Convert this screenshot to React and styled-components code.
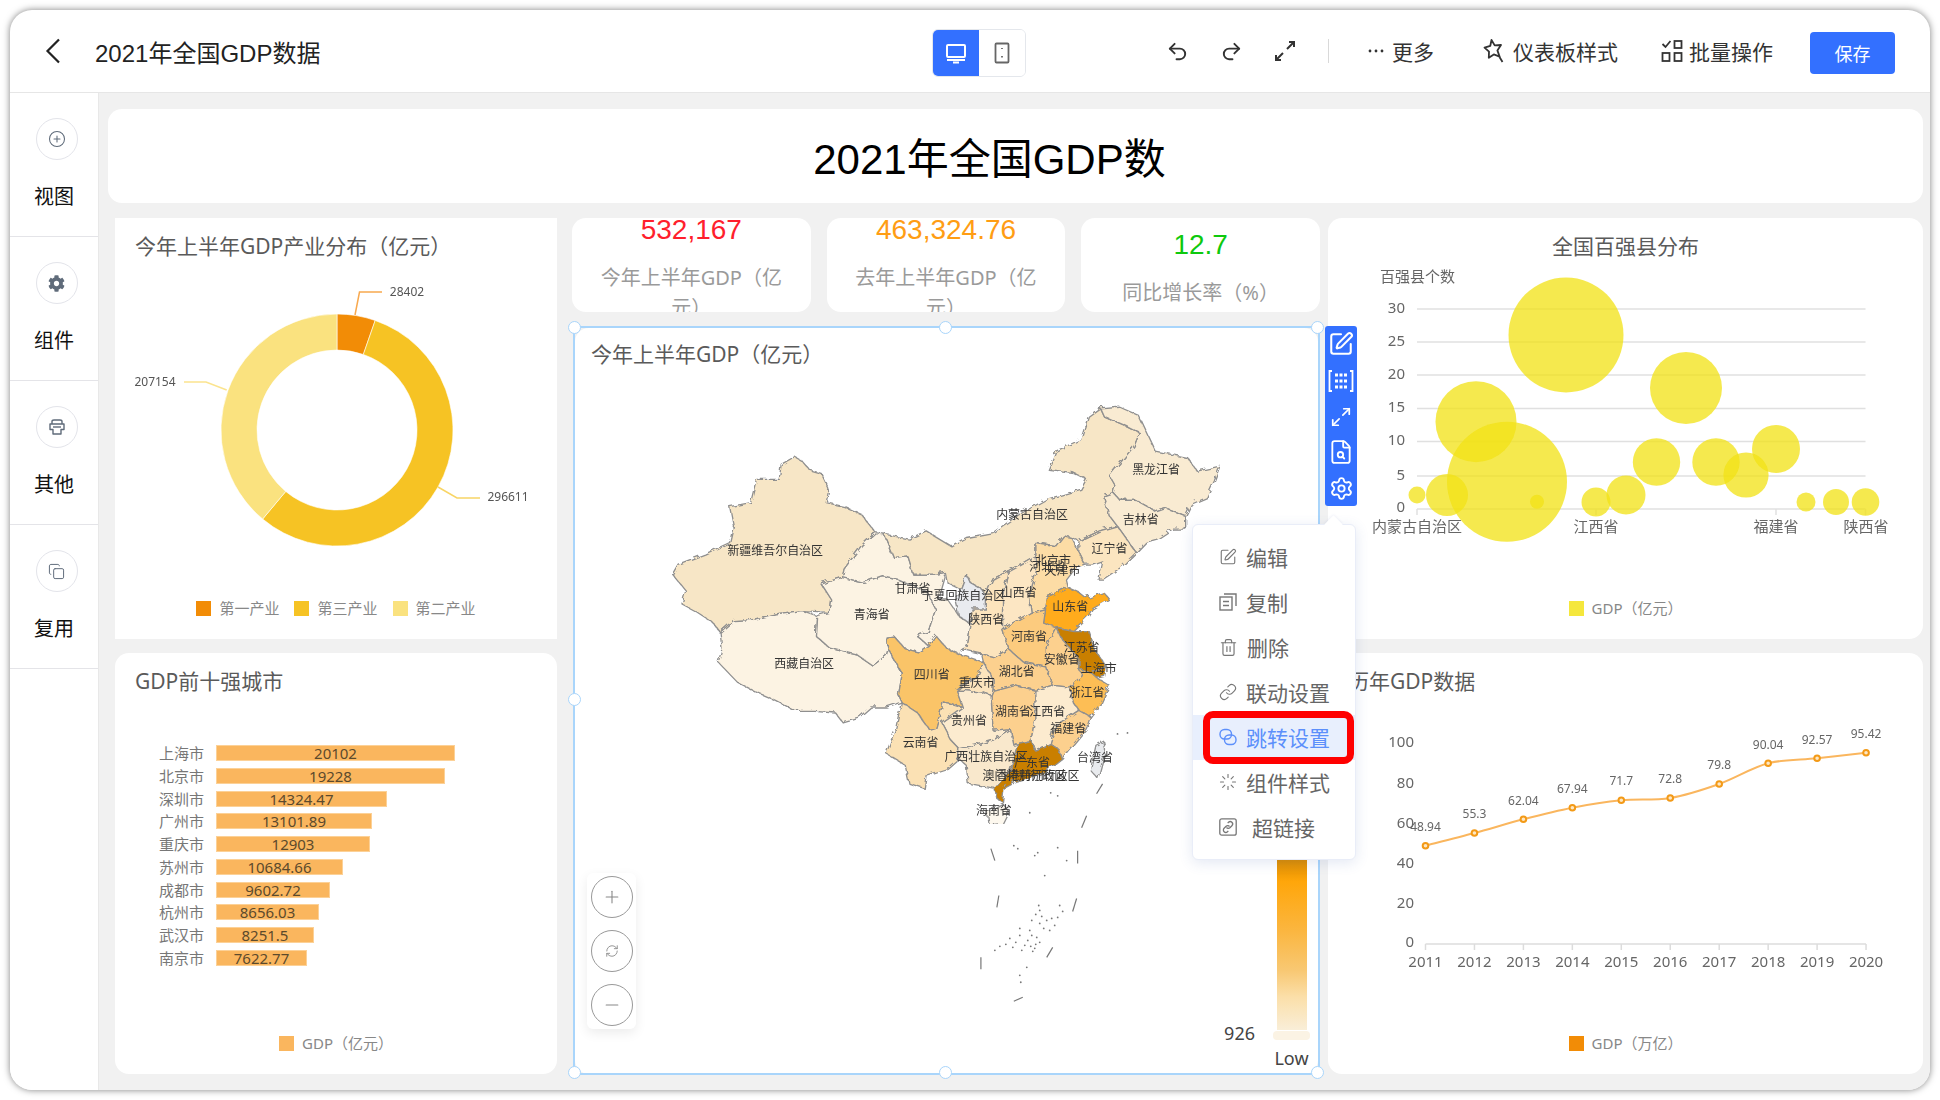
import styled, { createGlobalStyle } from "styled-components";
import {
  CirclePlus,
  Copy,
  FileSearch,
  Link,
  Loader,
  Maximize2,
  Minus,
  Plus,
  Redo2,
  RefreshCw,
  Settings,
  SquarePen,
  Trash2,
  Undo2,
} from "lucide-react";
import { FaCog } from "react-icons/fa";

const CJK = `"Noto Sans CJK SC", sans-serif`;
const UI_FONT = `"Noto Sans", ${CJK}`;
const HEAD_FONT = `"Liberation Sans", ${CJK}`;

const GlobalStyle = createGlobalStyle`
  html, body {
    margin: 0;
    background: #fff;
    overflow: hidden;
  }
  * {
    box-sizing: border-box;
  }
`;

const Window = styled.div`
  width: 1920px;
  height: 1080px;
  margin: 10px;
  display: flex;
  flex-direction: column;
  background: #fff;
  border-radius: 22px;
  overflow: hidden;
  box-shadow: 0 0 7px rgba(0, 0, 0, 0.5);
  font-family: ${UI_FONT};
`;

const Header = styled.header`
  height: 83px;
  flex: none;
  display: flex;
  align-items: center;
  border-bottom: 1px solid #e6e6e6;
`;

const HeaderLeft = styled.div`
  width: 922px;
  display: flex;
  align-items: center;
  padding-left: 35px;
  gap: 34px;
  color: #222;
`;

const PageName = styled.div`
  font: 24px ${HEAD_FONT};
  color: #222;
`;

const DeviceToggle = styled.div`
  display: flex;
  width: 94px;
  height: 48px;
  margin-top: 3px;
  border: 1px solid #e4e7ec;
  border-radius: 6px;
  overflow: hidden;
`;

const DeviceButton = styled.div`
  flex: 1;
  display: flex;
  align-items: center;
  justify-content: center;
  background: ${(props) => (props.$active ? "#3370ff" : "#fff")};
  color: ${(props) => (props.$active ? "#fff" : "#666")};
`;

const HeaderRight = styled.div`
  flex: 1;
  display: flex;
  align-items: center;
  justify-content: flex-end;
  padding-right: 35px;
  color: #333;
`;

const HistoryButtons = styled.div`
  display: flex;
  gap: 31px;
  color: #333;
`;

const HeaderDivider = styled.div`
  width: 1px;
  height: 24px;
  background: #d9d9d9;
  margin: 0 39px 0 32px;
`;

const ActionLink = styled.div`
  display: flex;
  align-items: center;
  gap: ${(props) => props.$gap || 8}px;
  margin-right: ${(props) => props.$after}px;
  font-size: 21px;
  color: #333;
`;

const SaveButton = styled.button`
  width: 85px;
  height: 42px;
  margin-top: 3px;
  border: 0;
  border-radius: 4px;
  background: #3370ff;
  color: #fff;
  font: 18px ${CJK};
  padding: 0;
`;

const Body = styled.div`
  flex: 1;
  display: flex;
  min-height: 0;
`;

const Sidebar = styled.aside`
  width: 89px;
  flex: none;
  border-right: 1px solid #e8e8e8;
  background: #fff;
`;

const SideItem = styled.div`
  height: 144px;
  display: flex;
  flex-direction: column;
  align-items: center;
  padding-top: 25px;
  gap: 22px;
  border-bottom: 1px solid #e4e4e8;
  font: 20px/28px ${CJK};
  color: #111;
`;

const SideIcon = styled.div`
  width: 42px;
  height: 42px;
  margin-left: 5px;
  display: flex;
  align-items: center;
  justify-content: center;
  border: 1px solid #e3e4ea;
  border-radius: 50%;
  color: #5f6b7a;
`;

const Canvas = styled.main`
  flex: 1;
  min-width: 0;
  background: #f1f1f1;
  padding: 16px 7px 16px 9px;
  display: flex;
  flex-direction: column;
  gap: 15px;
`;

const TitleCard = styled.div`
  height: 94px;
  flex: none;
  display: flex;
  align-items: center;
  justify-content: center;
  padding: 0 52px 2px 0;
  background: #fff;
  border-radius: 14px;
  font: 42px ${HEAD_FONT};
  color: #000;
`;

const DashGrid = styled.div`
  margin-left: 7px;
  display: grid;
  grid-template-columns: 442px 748px 595px;
  grid-template-rows: 421px 421px;
  column-gap: 15px;
  row-gap: 14px;
`;

const Card = styled.section`
  display: flex;
  flex-direction: column;
  min-width: 0;
  background: #fff;
  border-radius: ${(props) => (props.$square ? "0" : "14px")};
  ${(props) =>
    props.$right &&
    `
    margin-left: -7px;
    margin-right: 7px;
  `}
`;

const CardTitle = styled.h3`
  margin: 0;
  height: 42px;
  flex: none;
  padding: ${(props) => props.$top || 15}px ${(props) => props.$inset || 20}px 0;
  font: 400 21px/26px ${UI_FONT};
  color: #5a5a5a;
  text-align: ${(props) => (props.$center ? "center" : "left")};
`;

const Chart = styled.svg`
  display: block;
  width: 100%;
  flex: 1;
  min-height: 0;
  font-family: ${UI_FONT};
  filter: blur(0.35px);
`;

const Legend = styled.div`
  flex: none;
  height: 18px;
  margin-bottom: 22px;
  display: flex;
  justify-content: center;
  gap: 15px;
  font: 15px/18px ${UI_FONT};
  color: #888;
`;

const LegendItem = styled.div`
  display: flex;
  align-items: center;
  gap: 8px;
`;

const Swatch = styled.i`
  width: 15px;
  height: 15px;
  background: ${(props) => props.$color};
`;

const BarList = styled.div`
  flex: 1;
  display: flex;
  flex-direction: column;
  gap: 6.75px;
  padding-top: 50px;
`;

const BarRow = styled.div`
  display: flex;
  align-items: center;
  gap: 12px;
  height: 16px;
`;

const BarLabel = styled.span`
  width: 89px;
  text-align: right;
  font: 15px/16px ${CJK};
  color: #777;
`;

const Bar = styled.div`
  width: ${(props) => props.$w}px;
  height: 16px;
  background: #fab65e;
  box-shadow: inset 0 0 0 1px #fcd197;
  text-align: center;
  font: 15px/16px ${UI_FONT};
  color: #5c4a2c;
`;

const MiddleColumn = styled.div`
  grid-row: span 2;
  display: flex;
  flex-direction: column;
  gap: 16px;
  min-height: 0;
`;

const StatRow = styled.div`
  height: 94px;
  flex: none;
  display: grid;
  grid-template-columns: repeat(3, 1fr);
  gap: 16px;
`;

const StatCard = styled.div`
  height: 94px;
  display: flex;
  flex-direction: column;
  align-items: center;
  justify-content: center;
  gap: 15px;
  padding: 5px 20px 0;
  background: #fff;
  border-radius: 14px;
  overflow: hidden;
`;

const StatValue = styled.div`
  flex: none;
  font: 28px/36px ${HEAD_FONT};
  color: ${(props) => props.$color};
`;

const StatLabel = styled.div`
  flex: none;
  font: 20px/30px ${UI_FONT};
  color: #9a9a9a;
  text-align: center;
`;

const MapArea = styled.div`
  position: relative;
  z-index: 5;
  height: 746px;
  margin: 0 2px 0 3px;
  display: flex;
  flex-direction: column;
  background: #fff;
  border-radius: 14px;
`;

const Frame = styled.div`
  position: absolute;
  inset: -2px -2px -1px -2px;
  border: 2px solid #a9d5fb;
  pointer-events: none;
`;

const Handle = styled.i`
  position: absolute;
  width: 13px;
  height: 13px;
  margin: -7.5px 0 0 -7.5px;
  left: ${(props) => props.$x};
  top: ${(props) => props.$y};
  background: #fff;
  border: 1.5px solid #a9d5fb;
  border-radius: 50%;
`;

const ZoomControl = styled.div`
  position: absolute;
  left: 12px;
  top: 545px;
  width: 49px;
  height: 156px;
  display: flex;
  flex-direction: column;
  align-items: center;
  justify-content: center;
  gap: 12px;
  background: #fff;
  border-radius: 6px;
  box-shadow: 0 4px 12px rgba(0, 0, 0, 0.08);
`;

const ZoomButton = styled.div`
  width: 42px;
  height: 42px;
  display: flex;
  align-items: center;
  justify-content: center;
  border: 1.5px solid #999;
  border-radius: 50%;
  color: #888;
`;

const ScaleBar = styled.div`
  position: absolute;
  left: 702px;
  top: 372px;
  width: 30px;
  height: 330px;
  background: linear-gradient(
    180deg,
    #c77f00 0%,
    #d98a00 48%,
    #ffa60a 55%,
    #fbb640 70%,
    #f8c873 82%,
    #fbdfa9 90%,
    #f9eed8 100%
  );
`;

const ScaleThumb = styled.div`
  position: absolute;
  left: 698px;
  top: 703px;
  width: 37px;
  height: 9px;
  background: #fbf3e4;
  border-radius: 4px;
`;

const ScaleValue = styled.div`
  position: absolute;
  right: 63px;
  top: 694px;
  font: 18px/22px ${UI_FONT};
  color: #444;
`;

const ScaleName = styled.div`
  position: absolute;
  left: 698px;
  top: 719px;
  width: 37px;
  text-align: center;
  font: 18px/22px ${UI_FONT};
  color: #444;
`;

const Toolbar = styled.div`
  position: absolute;
  left: calc(100% + 7px);
  top: -2px;
  width: 32px;
  height: 180px;
  display: flex;
  flex-direction: column;
  align-items: center;
  justify-content: space-between;
  padding: 5px 0;
  background: #3370ff;
  border-radius: 3px;
  color: #fff;
`;

const ContextMenu = styled.div`
  position: absolute;
  left: 617px;
  top: 196px;
  width: 164px;
  padding: 9.5px 0;
  background: #fff;
  border: 1px solid #e9edf8;
  border-radius: 6px;
  box-shadow: 0 3px 14px rgba(60, 90, 170, 0.14);
  &::before {
    content: "";
    position: absolute;
    left: 134px;
    top: -7px;
    width: 13px;
    height: 13px;
    background: #fff;
    transform: rotate(45deg);
    box-shadow: -1px -1px 2px rgba(60, 90, 170, 0.06);
  }
`;

const MenuItem = styled.div`
  position: relative;
  height: 45px;
  display: flex;
  align-items: center;
  gap: 9px;
  padding-left: 26px;
  font: 21px/28px ${CJK};
  color: ${(props) => (props.$active ? "#5c8ffb" : "#666")};
  background: ${(props) => (props.$active ? "#e8effd" : "transparent")};
  & > svg {
    color: ${(props) => (props.$active ? "#5c8ffb" : "#777")};
  }
  ${(props) =>
    props.$active &&
    `
    &::after {
      content: "";
      position: absolute;
      left: 10px;
      right: 1px;
      top: -4px;
      bottom: -4px;
      border: 7px solid #f00;
      border-radius: 10px;
    }
  `}
`;

const MenuLabel = styled.span`
  margin-left: ${(props) => props.$shift || 0}px;
`;

const backIcon = (
  <svg width="16" height="26" viewBox="0 0 16 26" fill="none" stroke="currentColor" strokeWidth="2.2">
    <path d="M14 1.5L2.5 13 14 24.5" />
  </svg>
);

const monitorIcon = (
  <svg width="22" height="22" viewBox="0 0 22 22" fill="none" stroke="currentColor" strokeWidth="2">
    <rect x="2" y="3" width="18" height="12" rx="1" />
    <path d="M2 18h18M8 20.5h6" />
  </svg>
);

const phoneIcon = (
  <svg width="16" height="22" viewBox="0 0 16 22" fill="none" stroke="currentColor" strokeWidth="1.8">
    <rect x="1.5" y="1.5" width="13" height="19" rx="1" />
    <path d="M8 6v1M8 14v1.5" />
  </svg>
);

const expandIcon = (
  <svg width="22" height="22" viewBox="0 0 22 22" fill="none" stroke="currentColor" strokeWidth="2">
    <path d="M13 9l7-7M15 2h5v5M9 13l-7 7M2 15v5h5" />
  </svg>
);

const starIcon = (
  <svg width="22" height="26" viewBox="0 0 22 26" fill="none" stroke="currentColor" strokeWidth="1.8" strokeLinejoin="round">
    <path d="M8.5 2l3.2 5.4 6.3-.4-3.6 5.4 2.2 6.2-5.8-2.2-5 3.4.2-6.2L1.5 9.6l5.8-1.8z" />
    <path d="M16.5 19l3 5" />
  </svg>
);

const batchIcon = (
  <svg width="22" height="24" viewBox="0 0 22 24" fill="none" stroke="currentColor" strokeWidth="1.8">
    <path d="M1.5 5l3 3 5-6" />
    <rect x="13.5" y="2" width="7" height="7" />
    <rect x="1.5" y="14" width="7" height="8" />
    <rect x="13.5" y="14" width="7" height="8" />
  </svg>
);

const dotsIcon = (
  <svg width="16" height="6" viewBox="0 0 16 6" fill="currentColor">
    <circle cx="2" cy="3" r="1.4" />
    <circle cx="8" cy="3" r="1.4" />
    <circle cx="14" cy="3" r="1.4" />
  </svg>
);

const printerIcon = (
  <svg width="18" height="18" viewBox="0 0 18 18" fill="none" stroke="currentColor" strokeWidth="1.4" strokeLinejoin="round">
    <path d="M4 6V3.5C4 2.5 5 2 6 2h6c1 0 2 .5 2 1.5V6" />
    <path d="M2 6h14v5.5h-3V16H5v-4.5H2z" />
    <path d="M5 9h8" />
  </svg>
);

const gridIcon = (
  <svg width="26" height="26" viewBox="0 0 26 26" fill="none" stroke="currentColor" strokeWidth="1.8">
    <path d="M4 3H1.5v20H4M22 3h2.5v20H22" />
    <path d="M7 7h12M7 13h12M7 19h12" strokeWidth="3" strokeDasharray="3 1.5" />
  </svg>
);

const copyFileIcon = (
  <svg width="18" height="18" viewBox="0 0 18 18" fill="none" stroke="currentColor" strokeWidth="1.4">
    <rect x="1" y="4" width="12" height="13" />
    <path d="M5 1h12v12M4 8.5h6M4 12.5h6" />
  </svg>
);

const jumpIcon = (
  <svg width="18" height="18" viewBox="0 0 18 18" fill="none" stroke="currentColor" strokeWidth="1.4">
    <rect x="1" y="1.5" width="11.5" height="9.5" rx="4.5" />
    <rect x="5.5" y="7" width="11.5" height="9.5" rx="4.5" />
  </svg>
);

const hyperlinkIcon = (
  <svg width="18" height="18" viewBox="0 0 18 18" fill="none" stroke="currentColor" strokeWidth="1.3">
    <rect x="0.8" y="0.8" width="16.4" height="16.4" rx="2" />
    <path d="M7.5 9.5a2.4 2.4 0 0 0 3.4.2l2-2a2.4 2.4 0 0 0-3.4-3.4l-.8.8M10.5 8.5a2.4 2.4 0 0 0-3.4-.2l-2 2a2.4 2.4 0 0 0 3.4 3.4l.8-.8" />
  </svg>
);

const sideItems = [
  { label: "视图", icon: <CirclePlus size={18} strokeWidth={1.4} /> },
  { label: "组件", icon: <FaCog size={17} /> },
  { label: "其他", icon: printerIcon },
  { label: "复用", icon: <Copy size={17} strokeWidth={1.4} /> },
];

const menuItems = [
  { label: "编辑", icon: <SquarePen size={18} strokeWidth={1.5} /> },
  { label: "复制", icon: copyFileIcon },
  { label: "删除", icon: <Trash2 size={19} strokeWidth={1.5} /> },
  { label: "联动设置", icon: <Link size={18} strokeWidth={1.5} /> },
  { label: "跳转设置", icon: jumpIcon, active: true },
  { label: "组件样式", icon: <Loader size={18} strokeWidth={1.5} /> },
  { label: "超链接", icon: hyperlinkIcon, shift: 6 },
];

const cities = [
  ["上海市", "20102", 239],
  ["北京市", "19228", 229],
  ["深圳市", "14324.47", 171],
  ["广州市", "13101.89", 156],
  ["重庆市", "12903", 154],
  ["苏州市", "10684.66", 127],
  ["成都市", "9602.72", 114],
  ["杭州市", "8656.03", 103],
  ["武汉市", "8251.5", 98],
  ["南京市", "7622.77", 91],
];

// donut chart, values in 亿元
const donutSlices = [
  { value: 28402, color: "#f28c06" },
  { value: 296611, color: "#f6c324" },
  { value: 207154, color: "#fae27f" },
];

function donutPath(startAngle, endAngle) {
  const cx = 337;
  const cy = 430;
  const outer = 116;
  const inner = 80;
  const point = (r, a) => `${cx + r * Math.sin(a)} ${cy - r * Math.cos(a)}`;
  const large = endAngle - startAngle > Math.PI ? 1 : 0;
  return `M${point(outer, startAngle)} A${outer} ${outer} 0 ${large} 1 ${point(outer, endAngle)} L${point(inner, endAngle)} A${inner} ${inner} 0 ${large} 0 ${point(inner, startAngle)} Z`;
}

function DonutChart() {
  const total = donutSlices.reduce((sum, s) => sum + s.value, 0);
  let angle = 0;
  return (
    <Chart viewBox="115 260 442 339">
      {donutSlices.map((s) => {
        const start = angle;
        angle += (s.value / total) * Math.PI * 2;
        return <path key={s.value} d={donutPath(start, angle)} fill={s.color} stroke="#fff" strokeWidth="0.6" />;
      })}
      <g fill="none" strokeWidth="1.5">
        <path d="M355 315l4.5-23H382" stroke="#f8a94f" />
        <path d="M226.7 390L206 382h-22" stroke="#fbe48e" />
        <path d="M438 487l19 11h23" stroke="#f8d565" />
      </g>
      <g fontSize="12" fill="#555" textAnchor="middle">
        <text x="407" y="296">28402</text>
        <text x="155" y="386">207154</text>
        <text x="508" y="501">296611</text>
      </g>
    </Chart>
  );
}

const bubbles = [
  [1566, 335, 57.5],
  [1507, 481.7, 60],
  [1476, 421.7, 40.5],
  [1686, 388, 36],
  [1447, 495, 21],
  [1417, 495, 8.5],
  [1537, 501.7, 7],
  [1596, 502, 14.5],
  [1626, 495, 19.5],
  [1656.5, 462, 23.7],
  [1716, 462, 23.7],
  [1746, 475, 22.6],
  [1776, 449, 24],
  [1806, 502, 9.5],
  [1836, 502, 13],
  [1865.5, 502, 13.8],
];

const bubbleTicks = [
  ["30", 309],
  ["25", 342],
  ["20", 375],
  ["15", 408.5],
  ["10", 441.5],
  ["5", 476],
];

function BubbleChart() {
  return (
    <Chart viewBox="1328 260 595 339">
      <g stroke="#e0e0e0" strokeWidth="1.5">
        {bubbleTicks.map(([, y]) => (
          <line key={y} x1="1417" x2="1865.5" y1={y} y2={y} />
        ))}
        <line x1="1417" x2="1865.5" y1="509" y2="509" />
        {[1417, 1596, 1776, 1865.5].map((x) => (
          <line key={x} x1={x} x2={x} y1="509" y2="515" />
        ))}
      </g>
      <g fill="#f2e217" fillOpacity="0.76">
        {bubbles.map(([x, y, r]) => (
          <circle key={x} cx={x} cy={y} r={r} />
        ))}
      </g>
      <g fontSize="15" fill="#666" textAnchor="end">
        {bubbleTicks.map(([label, y]) => (
          <text key={label} x="1405" y={y + 3.5}>
            {label}
          </text>
        ))}
        <text x="1405" y="512">0</text>
      </g>
      <text x="1380" y="282" fontSize="15" fill="#666">百强县个数</text>
      <g fontSize="15" fill="#666" textAnchor="middle">
        <text x="1417" y="532">内蒙古自治区</text>
        <text x="1596" y="532">江西省</text>
        <text x="1776" y="532">福建省</text>
        <text x="1866" y="532">陕西省</text>
      </g>
    </Chart>
  );
}

const linePoints = [
  ["2011", "48.94", 845.7, 827],
  ["2012", "55.3", 833, 814],
  ["2013", "62.04", 819.3, 801],
  ["2014", "67.94", 807.7, 789],
  ["2015", "71.7", 800.3, 781],
  ["2016", "72.8", 798, 779],
  ["2017", "79.8", 784, 765],
  ["2018", "90.04", 763.3, 745],
  ["2019", "92.57", 758.3, 740],
  ["2020", "95.42", 752.7, 734],
];

const lineX = (i) => 1425.5 + i * 48.95;

function smoothLine() {
  const pts = linePoints.map((p, i) => [lineX(i), p[2]]);
  let d = `M${pts[0][0]} ${pts[0][1]}`;
  for (let i = 0; i < pts.length - 1; i++) {
    const p0 = pts[Math.max(i - 1, 0)];
    const p1 = pts[i];
    const p2 = pts[i + 1];
    const p3 = pts[Math.min(i + 2, pts.length - 1)];
    d += ` C${p1[0] + (p2[0] - p0[0]) / 6} ${p1[1] + (p2[1] - p0[1]) / 6} ${p2[0] - (p3[0] - p1[0]) / 6} ${p2[1] - (p3[1] - p1[1]) / 6} ${p2[0]} ${p2[1]}`;
  }
  return d;
}

function LineChart() {
  return (
    <Chart viewBox="1328 695 595 339">
      <g stroke="#dcdcdc" strokeWidth="1.5">
        <line x1="1425.5" x2="1866" y1="944" y2="944" />
        {linePoints.map((p, i) => (
          <line key={p[0]} x1={lineX(i)} x2={lineX(i)} y1="944" y2="950" />
        ))}
      </g>
      <g fontSize="15" fill="#666" textAnchor="end">
        <text x="1414" y="747">100</text>
        <text x="1414" y="788">80</text>
        <text x="1414" y="828">60</text>
        <text x="1414" y="868">40</text>
        <text x="1414" y="908">20</text>
        <text x="1414" y="947">0</text>
      </g>
      <path d={smoothLine()} fill="none" stroke="#fab65e" strokeWidth="2" />
      {linePoints.map((p, i) => (
        <g key={p[0]} textAnchor="middle" fill="#666">
          <circle cx={lineX(i)} cy={p[2]} r="2.8" fill="#fde7c4" stroke="#f39a17" strokeWidth="2" />
          <text x={lineX(i)} y={p[3] + 4} fontSize="12">
            {p[1]}
          </text>
          <text x={lineX(i)} y="967" fontSize="15">
            {p[0]}
          </text>
        </g>
      ))}
    </Chart>
  );
}

// province outlines, traced in a 1568x1380 box laid over x 640..1240, y 380..840
const provinces = [
  ["#f7e6c6", "400,222 420,235 440,262 470,272 490,320 483,360 530,372 575,395 612,450 575,490 530,560 525,585 470,605 495,650 490,690 420,685 350,695 290,712 240,715 205,750 185,720 145,690 105,665 115,625 80,575 95,545 130,530 165,515 230,480 240,430 230,372 285,360 300,290 360,290 365,245"],
  ["#fcf3e3", "205,750 240,715 290,712 350,695 420,685 458,700 455,760 490,795 560,815 605,850 640,820 645,800 680,870 670,935 680,960 640,975 600,975 570,1005 525,1020 505,990 450,985 400,985 350,955 300,930 250,900 200,840 210,800"],
  ["#fcf3e3", "470,605 525,585 580,600 630,580 670,590 710,610 745,625 770,680 750,750 720,760 750,790 725,810 690,800 660,762 640,765 645,800 640,820 605,850 560,815 490,795 455,760 458,700 490,690 495,650"],
  ["#fcf3e3", "612,450 635,455 660,525 695,520 710,575 770,575 795,570 785,610 775,650 800,650 830,700 860,725 850,790 835,800 830,815 800,800 770,760 750,790 720,760 750,750 770,680 745,625 710,610 670,590 630,580 580,600 525,585 530,560 575,490"],
  ["#f7e6c6", "635,455 700,470 745,445 810,490 850,465 920,450 990,395 1060,350 1150,320 1165,290 1130,270 1065,260 1085,205 1150,170 1170,100 1200,75 1210,100 1270,130 1305,150 1290,190 1225,280 1240,310 1235,330 1210,340 1225,400 1245,430 1200,445 1145,475 1125,465 1105,460 1085,490 1030,480 1030,520 1000,540 960,565 920,590 900,640 890,620 860,600 850,575 835,620 800,600 795,570 770,575 710,575 695,520 660,525"],
  ["#f9ebd2", "1200,75 1250,70 1300,95 1345,205 1430,225 1455,265 1515,250 1500,295 1480,345 1440,365 1425,400 1370,375 1345,385 1290,350 1250,350 1235,330 1240,310 1225,280 1290,190 1305,150 1270,130 1210,100"],
  ["#f9ebd2", "1210,340 1235,330 1250,350 1290,350 1345,385 1370,375 1425,400 1425,440 1390,440 1350,470 1320,480 1295,510 1270,470 1245,430 1225,400"],
  ["#fbe5c0", "1245,430 1270,470 1295,510 1255,555 1210,590 1195,590 1205,535 1180,545 1160,545 1145,510 1145,475 1200,445"],
  ["#fcdca5", "1030,480 1085,490 1105,460 1125,465 1145,510 1160,545 1130,560 1110,590 1115,615 1060,645 1055,680 1020,690 1015,640 1035,560 1030,520"],
  ["#fce6c3", "1030,520 1035,560 1015,640 1020,690 945,740 945,640 960,565 1000,540"],
  ["#fce4bd", "900,640 920,590 960,565 945,640 945,740 960,800 925,825 890,815 835,800 850,790 860,725 865,680 900,680"],
  ["#e9ebef", "835,620 850,575 860,600 890,620 900,640 900,680 865,680 860,725 830,700 820,650"],
  ["#ffab1a", "1055,680 1060,645 1115,615 1145,630 1165,650 1210,630 1225,650 1180,680 1170,700 1130,745 1085,735 1050,720"],
  ["#fccb7e", "945,740 1020,690 1055,680 1050,720 1085,735 1060,790 1060,855 1000,840 960,800"],
  ["#c97f00", "1085,735 1130,745 1170,745 1185,800 1215,850 1175,870 1145,860 1145,830 1100,770"],
  ["#fcd08e", "1060,790 1085,735 1100,770 1145,830 1145,860 1155,880 1120,915 1075,910 1060,855"],
  ["#c97f00", "1175,870 1215,850 1210,880 1190,885"],
  ["#fdbe55", "1145,860 1175,870 1190,885 1225,910 1205,960 1175,1005 1145,985 1130,960 1120,915 1155,880"],
  ["#fcd08e", "895,840 890,815 925,825 960,800 1000,840 1060,855 1075,910 1030,925 975,908 920,925 920,890"],
  ["#fce4bd", "895,840 920,890 920,925 915,940 890,930 840,925 825,925 850,900 880,880"],
  ["#fac468", "640,765 660,762 690,800 725,810 750,790 770,760 800,800 830,815 895,840 880,880 850,900 825,925 840,975 810,965 790,960 770,1040 755,1045 720,990 680,960 670,935 680,870 645,800"],
  ["#fcd08e", "920,925 975,908 1030,925 1030,1010 1020,1075 985,1085 975,1090 965,1040 920,1045 915,940"],
  ["#fcebcf", "1030,925 1075,910 1120,915 1130,960 1145,985 1085,1030 1070,1085 1030,1105 1020,1075 1030,1010"],
  ["#fcd08e", "1145,985 1175,1005 1165,1040 1100,1130 1090,1100 1070,1085 1085,1030"],
  ["#c97f00", "985,1085 1020,1075 1030,1105 1070,1085 1090,1100 1100,1130 1050,1175 975,1200 950,1215 945,1260 930,1250 925,1220 965,1165"],
  ["#f9e8cc", "830,1130 830,1100 890,1085 920,1075 965,1040 975,1090 985,1085 965,1165 925,1220 880,1210 855,1205 850,1150"],
  ["#fcebcf", "785,1020 810,1000 840,975 825,925 840,925 890,930 915,940 920,1045 965,1040 920,1075 890,1085 830,1100 810,1075"],
  ["#fbe1b4", "680,960 720,990 755,1045 770,1040 790,960 810,965 840,975 810,1000 785,1020 810,1075 830,1100 830,1130 800,1160 745,1180 740,1220 700,1205 690,1150 640,1115 665,1040"],
  ["#fdf8ee", "905,1290 945,1265 960,1290 945,1325 910,1330"],
  ["#e9ebee", "1190,1090 1210,1078 1215,1105 1195,1190 1175,1165"],
];

const mapLabels = [
  ["黑龙江省", 1350, 265],
  ["内蒙古自治区", 1025, 400],
  ["吉林省", 1310, 415],
  ["辽宁省", 1228, 502],
  ["新疆维吾尔自治区", 352, 508],
  ["北京市", 1080, 540],
  ["河北省", 1065, 558],
  ["天津市", 1105, 570],
  ["甘肃省", 712, 622],
  ["宁夏回族自治区", 845, 645],
  ["山西省", 990, 635],
  ["青海省", 605, 702],
  ["山东省", 1125, 678],
  ["陕西省", 905, 717],
  ["河南省", 1017, 767],
  ["江苏省", 1155, 800],
  ["安徽省", 1103, 838],
  ["上海市", 1200, 865],
  ["西藏自治区", 428, 850],
  ["四川省", 762, 882],
  ["湖北省", 985, 872],
  ["重庆市", 880, 905],
  ["浙江省", 1168, 935],
  ["湖南省", 975, 992],
  ["江西省", 1065, 992],
  ["贵州省", 860, 1020],
  ["福建省", 1120, 1045],
  ["云南省", 733, 1085],
  ["广西壮族自治区", 905, 1127],
  ["台湾省", 1190, 1130],
  ["广东省", 1025, 1145],
  ["香港特别行政区", 1040, 1185],
  ["澳门特别行政区", 1005, 1187],
  ["海南省", 925, 1292],
];

const seaDashes = [
  [1103, 783, 1097, 793],
  [1087, 815, 1082, 827],
  [991, 848, 995, 860],
  [1078, 850, 1078, 863],
  [999, 895, 997, 907],
  [1077, 898, 1073, 911],
  [981, 957, 981, 969],
  [1053, 947, 1047, 957],
  [1014, 1001, 1023, 997],
];

const seaDots = [
  [1039, 905], [1040, 910], [1036, 914], [1060, 905], [1063, 911], [1058, 917],
  [1032, 920], [1040, 923], [1047, 920], [1055, 925], [1020, 928], [1020, 935],
  [1010, 938], [1032, 935], [1037, 937], [1050, 930], [995, 950], [1000, 946],
  [1013, 947], [1025, 945], [1035, 948], [1033, 951], [1040, 942], [1027, 967],
  [1020, 975], [1021, 982], [1014, 845], [1018, 848], [1038, 852], [1035, 855],
  [1058, 847], [1067, 860], [1045, 875], [1051, 792], [1058, 795], [1030, 812],
  [1118, 733], [1128, 732], [1042, 916], [1044, 928], [1052, 918], [1028, 940],
  [1016, 942], [1006, 944], [1036, 944], [1031, 946], [1022, 950], [1030, 930],
];

const labelX = (x) => 640 + x / 2.613;
const labelY = (y) => 380 + y / 3;

function ChinaMap() {
  return (
    <Chart viewBox="575 368 743 706">
      <defs>
        <filter id="rough-edge" x="0" y="0" width="100%" height="100%">
          <feTurbulence baseFrequency="0.11" numOctaves="2" seed="4" result="noise" />
          <feDisplacementMap in="SourceGraphic" in2="noise" scale="5" />
        </filter>
      </defs>
      <g filter="url(#rough-edge)">
        <g transform="translate(640 380) scale(0.3827 0.3333)">
          {provinces.map(([color, points]) => (
            <polygon
              key={points}
              points={points}
              fill={color}
              stroke="#8f8f8f"
              strokeWidth="1.3"
              strokeLinejoin="round"
              vectorEffect="non-scaling-stroke"
            />
          ))}
        </g>
      </g>
      <g stroke="#777" strokeWidth="1.2">
        {seaDashes.map(([x1, y1, x2, y2]) => (
          <line key={x1 + y1} x1={x1} y1={y1} x2={x2} y2={y2} />
        ))}
      </g>
      <g fill="#777">
        {seaDots.map(([x, y]) => (
          <circle key={x * 2000 + y} cx={x} cy={y} r="0.9" />
        ))}
      </g>
      <g fontSize="12" fill="#333" textAnchor="middle" fontFamily={CJK}>
        {mapLabels.map(([name, x, y]) => (
          <text key={name} x={labelX(x)} y={labelY(y) + 4}>
            {name}
          </text>
        ))}
      </g>
    </Chart>
  );
}

export default function App() {
  return (
    <Window>
      <GlobalStyle />
      <Header>
        <HeaderLeft>
          {backIcon}
          <PageName>2021年全国GDP数据</PageName>
        </HeaderLeft>
        <DeviceToggle>
          <DeviceButton $active>{monitorIcon}</DeviceButton>
          <DeviceButton>{phoneIcon}</DeviceButton>
        </DeviceToggle>
        <HeaderRight>
          <HistoryButtons>
            <Undo2 size={23} strokeWidth={2} />
            <Redo2 size={23} strokeWidth={2} />
            {expandIcon}
          </HistoryButtons>
          <HeaderDivider />
          <ActionLink $after={49}>
            {dotsIcon}
            更多
          </ActionLink>
          <ActionLink $after={43}>
            {starIcon}
            仪表板样式
          </ActionLink>
          <ActionLink $after={37} $gap={6}>
            {batchIcon}
            批量操作
          </ActionLink>
          <SaveButton>保存</SaveButton>
        </HeaderRight>
      </Header>
      <Body>
        <Sidebar>
          {sideItems.map((item) => (
            <SideItem key={item.label}>
              <SideIcon>{item.icon}</SideIcon>
              {item.label}
            </SideItem>
          ))}
        </Sidebar>
        <Canvas>
          <TitleCard>2021年全国GDP数</TitleCard>
          <DashGrid>
            <Card $square>
              <CardTitle>今年上半年GDP产业分布（亿元）</CardTitle>
              <DonutChart />
              <Legend>
                <LegendItem>
                  <Swatch $color="#f28c06" />
                  第一产业
                </LegendItem>
                <LegendItem>
                  <Swatch $color="#f6c324" />
                  第三产业
                </LegendItem>
                <LegendItem>
                  <Swatch $color="#fae27f" />
                  第二产业
                </LegendItem>
              </Legend>
            </Card>
            <MiddleColumn>
              <StatRow>
                <StatCard>
                  <StatValue $color="#ff1f2d">532,167</StatValue>
                  <StatLabel>今年上半年GDP（亿元）</StatLabel>
                </StatCard>
                <StatCard>
                  <StatValue $color="#ff9d14">463,324.76</StatValue>
                  <StatLabel>去年上半年GDP（亿元）</StatLabel>
                </StatCard>
                <StatCard>
                  <StatValue $color="#0ec90e">12.7</StatValue>
                  <StatLabel>同比增长率（%）</StatLabel>
                </StatCard>
              </StatRow>
              <MapArea>
                <CardTitle $inset={16} $top={13}>今年上半年GDP（亿元）</CardTitle>
                <ChinaMap />
                <ZoomControl>
                  <ZoomButton>
                    <Plus size={20} strokeWidth={1.3} />
                  </ZoomButton>
                  <ZoomButton>
                    <RefreshCw size={14} strokeWidth={1.5} />
                  </ZoomButton>
                  <ZoomButton>
                    <Minus size={20} strokeWidth={1.3} />
                  </ZoomButton>
                </ZoomControl>
                <ScaleBar />
                <ScaleThumb />
                <ScaleValue>926</ScaleValue>
                <ScaleName>Low</ScaleName>
                <Frame>
                  {["0%", "50%", "100%"].map((x) =>
                    ["0%", "50%", "100%"].map((y) =>
                      x === "50%" && y === "50%" ? null : <Handle key={x + y} $x={x} $y={y} />,
                    ),
                  )}
                </Frame>
                <Toolbar>
                  <SquarePen size={26} strokeWidth={1.9} />
                  {gridIcon}
                  <Maximize2 size={22} strokeWidth={1.9} />
                  <FileSearch size={26} strokeWidth={1.7} />
                  <Settings size={25} strokeWidth={1.8} />
                </Toolbar>
                <ContextMenu>
                  {menuItems.map((item) => (
                    <MenuItem key={item.label} $active={item.active}>
                      {item.icon}
                      <MenuLabel $shift={item.shift}>{item.label}</MenuLabel>
                    </MenuItem>
                  ))}
                </ContextMenu>
              </MapArea>
            </MiddleColumn>
            <Card $right>
              <CardTitle $center>全国百强县分布</CardTitle>
              <BubbleChart />
              <Legend>
                <LegendItem>
                  <Swatch $color="#f5e73c" />
                  GDP（亿元）
                </LegendItem>
              </Legend>
            </Card>
            <Card>
              <CardTitle>GDP前十强城市</CardTitle>
              <BarList>
                {cities.map(([name, value, width]) => (
                  <BarRow key={name}>
                    <BarLabel>{name}</BarLabel>
                    <Bar $w={width}>{value}</Bar>
                  </BarRow>
                ))}
              </BarList>
              <Legend>
                <LegendItem>
                  <Swatch $color="#fab65e" />
                  GDP（亿元）
                </LegendItem>
              </Legend>
            </Card>
            <Card $right>
              <CardTitle>历年GDP数据</CardTitle>
              <LineChart />
              <Legend>
                <LegendItem>
                  <Swatch $color="#f28c06" />
                  GDP（万亿）
                </LegendItem>
              </Legend>
            </Card>
          </DashGrid>
        </Canvas>
      </Body>
    </Window>
  );
}
